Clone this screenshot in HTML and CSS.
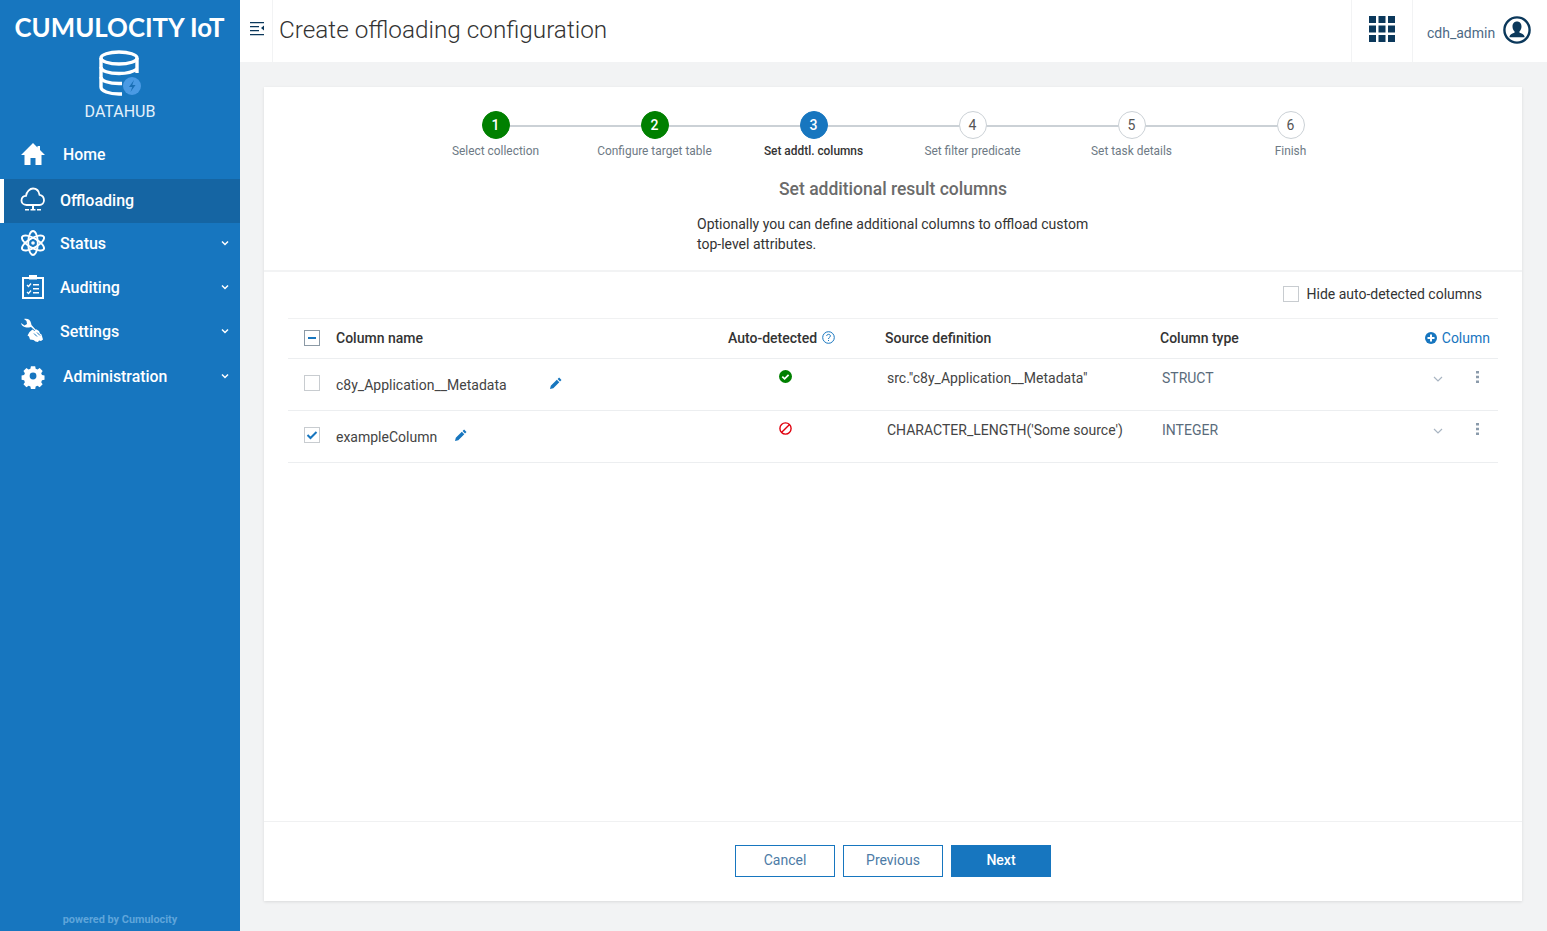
FILE: index.html
```html
<!DOCTYPE html>
<html lang="en">
<head>
    <meta charset="UTF-8">
    <meta name="viewport" content="width=device-width, initial-scale=1.0">
    <title>Create offloading configuration</title>
    <link rel="stylesheet" href="styles.css">
</head>
<body>
    <div class="app">
        <!-- Sidebar -->
        <aside class="sidebar">
            <div class="brand">CUMULOCITY IoT</div>
            <div class="app-logo">
                <svg class="db-icon" width="46" height="48" viewBox="0 0 46 48">
                    <g fill="none" stroke="#fff" stroke-width="3.400">
                        <ellipse cx="21" cy="8" rx="18" ry="6"/>
                        <path d="M3 8v29c0 4 8 7 18 7h3"/>
                        <path d="M39 8v15"/>
                        <path d="M3 17c0 4 8 6.500 18 6.500 8 0 14-1.500 18-4.500"/>
                        <path d="M3 27c0 4 8 6.500 18 6.500h3"/>
                    </g>
                    <circle cx="34" cy="36" r="9" fill="#4a9ae4"/>
                    <path d="M36 30l-5 7h3.200l-1.700 5 5-7h-3.200z" fill="#1a6fb5"/>
                </svg>
                <div class="app-name">DATAHUB</div>
            </div>
            <nav class="nav">
                <a class="nav-item nav-home">
                    <svg class="nav-icon" width="26" height="24" viewBox="0 0 26 24"><path d="M13 1L1 13h3.500v10h6v-7h5v7h6V13H25l-5-5V4h-2.500v1.500z" fill="#fff"/></svg>
                    <span>Home</span>
                </a>
                <a class="nav-item active">
                    <svg class="nav-icon" width="26" height="26" viewBox="0 0 26 26"><path d="M6.500 18C3 18 1.500 15.500 1.500 13.500c0-3 2.300-4.700 4.500-4.700C6.500 4.500 10 1.500 13 1.500c4 0 6 3 6.500 6.300 2.500.5 4.500 2.500 4.500 5.500 0 2.500-2 4.700-4.500 4.700z" fill="none" stroke="#fff" stroke-width="1.800"/><path d="M12 18h2v4h-2zM5 22h4v1.500H5zM10.500 22h5v1.500h-5zM17 22h4v1.500h-4z" fill="#fff"/></svg>
                    <span>Offloading</span>
                </a>
                <a class="nav-item">
                    <svg class="nav-icon" width="26" height="26" viewBox="0 0 26 26"><g fill="none" stroke="#fff" stroke-width="1.900"><ellipse cx="13" cy="13" rx="12" ry="4.800" transform="rotate(90 13 13)"/><ellipse cx="13" cy="13" rx="12.500" ry="4.800" transform="rotate(30 13 13)"/><ellipse cx="13" cy="13" rx="12.500" ry="4.800" transform="rotate(150 13 13)"/></g><circle cx="13" cy="13" r="1.800" fill="#fff"/></svg>
                    <span>Status</span>
                    <svg class="caret" width="8" height="6" viewBox="0 0 8 6"><path d="M1 1.500l3 3 3-3" fill="none" stroke="#fff" stroke-width="1.500"/></svg>
                </a>
                <a class="nav-item">
                    <svg class="nav-icon" width="26" height="26" viewBox="0 0 26 26"><path d="M3 4h20v20H3z" fill="none" stroke="#fff" stroke-width="2"/><path d="M9 1h8v4.500H9z" fill="#fff"/><path d="M7 11l1.500 1.500L11 9.500M7 18l1.500 1.500L11 16.500" fill="none" stroke="#fff" stroke-width="1.300"/><path d="M13 10h6v1.500h-6zM13 14h6v1.500h-6zM13 18h6v1.500h-6z" fill="#fff"/></svg>
                    <span>Auditing</span>
                    <svg class="caret" width="8" height="6" viewBox="0 0 8 6"><path d="M1 1.500l3 3 3-3" fill="none" stroke="#fff" stroke-width="1.500"/></svg>
                </a>
                <a class="nav-item">
                    <svg class="nav-icon" width="26" height="26" viewBox="0 0 26 26"><path d="M1 5l3.500 2.500L7 6 6.500 3 4 1c3.500-.8 6.500.8 7 4l.5 2 4 4.500 2 .5-1.500 1.500L11 9 9 9.500C6 10 2 9 1 5z" fill="#fff"/><path d="M9.500 14l3-2.500 2 1.500 2-1.500 2.500 1.500 1 2.500 1.500 1 1.500 5-2 1.500-2-.5-1 1.500-2.500-.5-2-1.500-3.500-.5-1-3-1.500-1z" fill="#fff"/><path d="M14 15.500l3 3M17 14.500l3 3" stroke="#1776bf" stroke-width="1"/></svg>
                    <span>Settings</span>
                    <svg class="caret" width="8" height="6" viewBox="0 0 8 6"><path d="M1 1.500l3 3 3-3" fill="none" stroke="#fff" stroke-width="1.500"/></svg>
                </a>
                <a class="nav-item nav-home nav-admin">
                    <svg class="nav-icon" width="26" height="26" viewBox="0 0 26 26"><path fill-rule="evenodd" d="M10.500 2h5l.6 3 2.200.9 2.500-1.700 3.500 3.500-1.700 2.500.9 2.200 3 .6v5l-3 .6-.9 2.200 1.700 2.500-3.500 3.500-2.500-1.700-2.200.9-.6 3h-5l-.6-3-2.200-.9-2.500 1.700-3.500-3.500 1.700-2.500-.9-2.200-3-.6v-5l3-.6.900-2.200-1.700-2.500 3.500-3.500 2.500 1.700 2.200-.9zM13 9.500a4 4 0 100 8 4 4 0 000-8z" transform="translate(2 1.500) scale(.85)" fill="#fff"/></svg>
                    <span>Administration</span>
                    <svg class="caret" width="8" height="6" viewBox="0 0 8 6"><path d="M1 1.500l3 3 3-3" fill="none" stroke="#fff" stroke-width="1.500"/></svg>
                </a>
            </nav>
            <div class="powered">powered by Cumulocity</div>
        </aside>

        <div class="main">
            <!-- Header -->
            <header class="topbar">
                <div class="toggle">
                    <svg width="14" height="14" viewBox="0 0 14 14"><path d="M0 0h14v1.300H0zM0 4h9v1.300H0zM0 8h9v1.300H0zM0 12h14v1.300H0z" fill="#0b385b"/><path d="M14 3.500v5L11 6z" fill="#0b385b"/></svg>
                </div>
                <h1 class="page-title">Create offloading configuration</h1>
                <div class="apps">
                    <svg width="26" height="26" viewBox="0 0 26 26" fill="#0b385b"><path d="M0 0h7v7H0zM9.500 0h7v7h-7zM19 0h7v7h-7zM0 9.500h7v7H0zM9.500 9.500h7v7h-7zM19 9.500h7v7h-7zM0 19h7v7H0zM9.500 19h7v7h-7zM19 19h7v7h-7z"/></svg>
                </div>
                <div class="user">
                    <span class="user-name">cdh_admin</span>
                    <svg width="28" height="28" viewBox="0 0 28 28"><circle cx="14" cy="14" r="12.600" fill="none" stroke="#0b385b" stroke-width="2.400"/><path d="M14 5.500c3 0 4.500 2.300 4.500 5 0 2-.8 3.800-2 4.800v1.500c2 .8 4.500 1.500 5 3.500v1H6.500v-1c.5-2 3-2.700 5-3.500v-1.500c-1.200-1-2-2.800-2-4.800 0-2.700 1.500-5 4.500-5z" fill="#0b385b"/></svg>
                </div>
            </header>

            <div class="content">
                <div class="card">
                    <!-- Stepper -->
                    <div class="stepper">
                        <div class="step done"><span class="dot">1</span><span class="step-label">Select collection</span></div>
                        <div class="step done"><span class="dot">2</span><span class="step-label">Configure target table</span></div>
                        <div class="step current"><span class="dot">3</span><span class="step-label">Set addtl. columns</span></div>
                        <div class="step"><span class="dot">4</span><span class="step-label">Set filter predicate</span></div>
                        <div class="step"><span class="dot">5</span><span class="step-label">Set task details</span></div>
                        <div class="step"><span class="dot">6</span><span class="step-label">Finish</span></div>
                    </div>

                    <h2 class="step-title">Set additional result columns</h2>
                    <p class="step-desc">Optionally you can define additional columns to offload custom top-level attributes.</p>

                    <div class="card-body">
                        <div class="filter-row">
                            <span class="check"></span>
                            <span>Hide auto-detected columns</span>
                        </div>

                        <div class="row head">
                            <div class="cell-check"><span class="check mixed"></span></div>
                            <div>Column name</div>
                            <div class="auto-head">Auto-detected
                                <svg width="13" height="13" viewBox="0 0 13 13"><circle cx="6.500" cy="6.500" r="5.800" fill="none" stroke="#1776bf"/><path d="M4.700 5c0-2.200 3.700-2.200 3.700 0 0 1.400-1.900 1.300-1.900 3" fill="none" stroke="#1776bf"/><path d="M6 9h1v1H6z" fill="#1776bf"/></svg>
                            </div>
                            <div>Source definition</div>
                            <div>Column type</div>
                            <div class="add-col">
                                <svg width="12" height="12" viewBox="0 0 12 12"><circle cx="6" cy="6" r="6" fill="#1776bf"/><path d="M5 2.500h2V5h2.500v2H7v2.500H5V7H2.500V5H5z" fill="#fff"/></svg>
                                <span>Column</span>
                            </div>
                        </div>

                        <div class="row item">
                            <div class="cell-check"><span class="check"></span></div>
                            <div class="name-cell name-wide"><span>c8y_Application__Metadata</span>
                                <svg class="pencil" width="12" height="12" viewBox="0 0 12 12"><path d="M0 12l.8-3.300 6-6L9.300 5.200l-6 6zM7.600 2l1.500-1.500 2.400 2.400L10 4.400z" fill="#1776bf"/></svg>
                            </div>
                            <div class="status-cell">
                                <svg width="13" height="13" viewBox="0 0 13 13"><circle cx="6.500" cy="6.500" r="6.500" fill="#008000"/><path d="M3.300 6.700l2.300 2.200 4-4" fill="none" stroke="#fff" stroke-width="1.700"/></svg>
                            </div>
                            <div class="src-cell">src."c8y_Application__Metadata"</div>
                            <div class="type-cell">STRUCT</div>
                            <div class="row-actions">
                                <svg width="10" height="6" viewBox="0 0 10 6"><path d="M1 1l4 4 4-4" fill="none" stroke="#a9b5c2" stroke-width="1.200"/></svg>
                                <svg width="3" height="12" viewBox="0 0 3 12" fill="#8b9bab"><path d="M0 0h3v2.500H0zM0 4.700h3v2.500H0zM0 9.500h3V12H0z"/></svg>
                            </div>
                        </div>

                        <div class="row item">
                            <div class="cell-check"><span class="check checked"><svg width="12" height="10" viewBox="0 0 12 10"><path d="M1.500 5l3 3 6-6" fill="none" stroke="#1776bf" stroke-width="2"/></svg></span></div>
                            <div class="name-cell"><span>exampleColumn</span>
                                <svg class="pencil" width="12" height="12" viewBox="0 0 12 12"><path d="M0 12l.8-3.300 6-6L9.300 5.200l-6 6zM7.600 2l1.500-1.500 2.400 2.400L10 4.400z" fill="#1776bf"/></svg>
                            </div>
                            <div class="status-cell">
                                <svg width="13" height="13" viewBox="0 0 13 13"><circle cx="6.500" cy="6.500" r="5.600" fill="none" stroke="#e0000e" stroke-width="1.400"/><path d="M2.700 10.300l7.600-7.600" stroke="#e0000e" stroke-width="1.400"/></svg>
                            </div>
                            <div class="src-cell">CHARACTER_LENGTH('Some source')</div>
                            <div class="type-cell">INTEGER</div>
                            <div class="row-actions">
                                <svg width="10" height="6" viewBox="0 0 10 6"><path d="M1 1l4 4 4-4" fill="none" stroke="#a9b5c2" stroke-width="1.200"/></svg>
                                <svg width="3" height="12" viewBox="0 0 3 12" fill="#8b9bab"><path d="M0 0h3v2.500H0zM0 4.700h3v2.500H0zM0 9.500h3V12H0z"/></svg>
                            </div>
                        </div>
                    </div>

                    <div class="card-footer">
                        <button class="btn">Cancel</button>
                        <button class="btn">Previous</button>
                        <button class="btn btn-primary">Next</button>
                    </div>
                </div>
            </div>
        </div>
    </div>
</body>
</html>
```

FILE: styles.css
```css
* {
    box-sizing: border-box;
}
body {
    font-family: Roboto, Arial, sans-serif;
    font-size: 14px;
    color: #333;
    background-color: #f2f3f4;
    margin: 0;
    padding: 0;
    overflow: hidden;
}
.app {
    display: flex;
    height: 931px;
}
/* Sidebar */
.sidebar {
    width: 240px;
    flex: none;
    background-color: #1776bf;
    color: #fff;
    display: flex;
    flex-direction: column;
}
.brand {
    font-family: Lato, Arial, sans-serif;
    font-weight: 700;
    font-size: 25.800px;
    line-height: 30px;
    text-align: center;
    padding: 12px 1px 0 0;
    white-space: nowrap;
}
.app-logo {
    display: flex;
    flex-direction: column;
    align-items: center;
    padding-top: 8px;
}
.db-icon {
    display: block;
    margin-left: 1px;
}
.app-name {
    font-size: 16px;
    line-height: 20px;
    margin-top: 4px;
    color: #e3f1fb;
}
.nav {
    margin-top: 10px;
}
.nav-item {
    display: flex;
    align-items: center;
    height: 44px;
    padding: 0 11px 0 20px;
    font-size: 16px;
    font-weight: 500;
}
.nav-icon {
    flex: none;
    margin-right: 14px;
}
.nav-item span {
    flex: 1;
}
.nav-home {
    padding-left: 20px;
    font-size: 15.800px;
}
.nav-home .nav-icon {
    margin-right: 17px;
}
.nav-admin {
    margin-top: 1px;
}
.nav-item.active {
    background-color: #1565a3;
    border-left: 4px solid #fff;
    padding-left: 16px;
    padding-bottom: 2px;
    margin-top: 3px;
}
.nav-item.active + .nav-item {
    margin-top: -2px;
}
.powered {
    margin-top: auto;
    padding-bottom: 5px;
    text-align: center;
    font-size: 10.900px;
    font-weight: 700;
    color: #5fa5da;
}
/* Header */
.main {
    flex: 1;
    display: flex;
    flex-direction: column;
    min-width: 0;
}
.topbar {
    height: 62px;
    flex: none;
    background-color: #fff;
    display: flex;
    align-items: stretch;
}
.toggle {
    width: 33px;
    display: flex;
    align-items: center;
    justify-content: center;
    border-right: 1px solid #f2f3f4;
    padding: 0 0 4px 2px;
}
.page-title {
    flex: 1;
    margin: 0;
    padding-left: 6px;
    font-size: 24.300px;
    font-weight: 300;
    line-height: 60px;
    color: #333;
}
.apps {
    width: 62px;
    display: flex;
    align-items: center;
    justify-content: center;
    border-left: 1px solid #f2f3f4;
    border-right: 1px solid #f2f3f4;
    padding-bottom: 4px;
}
.user {
    width: 134px;
    display: flex;
    align-items: center;
    padding-left: 14px;
    padding-bottom: 3px;
    gap: 8px;
}
.user-name {
    color: #4d6a85;
    padding-top: 7px;
}
/* Card */
.content {
    flex: 1;
    padding: 25px 25px 30px 24px;
    min-height: 0;
}
.card {
    height: 814px;
    background-color: #fff;
    box-shadow: 0 1px 3px rgba(0, 0, 0, 0.1);
    display: flex;
    flex-direction: column;
}
.stepper {
    display: grid;
    grid-template-columns: repeat(6, 159px);
    justify-content: center;
    padding-top: 24px;
}
.step {
    position: relative;
    display: flex;
    flex-direction: column;
    align-items: center;
}
.step::before {
    content: "";
    position: absolute;
    top: 14px;
    left: 50%;
    width: 100%;
    height: 2px;
    background-color: #cbd1d6;
}
.step:last-child::before {
    display: none;
}
.dot {
    position: relative;
    width: 28px;
    height: 28px;
    border-radius: 50%;
    border: 1px solid #cbd1d6;
    background-color: #fff;
    color: #555;
    text-align: center;
    line-height: 26px;
    font-size: 14px;
}
.done .dot {
    background-color: #008000;
    border-color: #008000;
    color: #fff;
    font-weight: 500;
}
.current .dot {
    background-color: #1776bf;
    border-color: #1776bf;
    color: #fff;
    font-weight: 500;
}
.step-label {
    font-size: 11.900px;
    line-height: 14px;
    margin-top: 5px;
    color: #6e7a85;
    white-space: nowrap;
}
.current .step-label {
    color: #333;
    font-weight: 500;
}
.step-title {
    margin: 21px 0 0;
    text-align: center;
    font-size: 17.500px;
    font-weight: 500;
    line-height: 21px;
    color: #6b6b6b;
}
.step-desc {
    width: 410px;
    margin: 14px 0 0 433px;
    line-height: 20px;
    padding-bottom: 16px;
    color: #333;
}
.card-body {
    flex: 1;
    border-top: 2px solid #f2f3f4;
    padding: 0 24px;
}
.filter-row {
    height: 46px;
    display: flex;
    align-items: center;
    justify-content: flex-end;
    gap: 7px;
    padding: 0 16px 2px 0;
    color: #333;
}
.check {
    display: inline-flex;
    align-items: center;
    justify-content: center;
    width: 16px;
    height: 16px;
    border: 1px solid #c8ccd0;
    background-color: #fff;
}
.check.mixed {
    border-color: #8c9aa6;
}
.check.mixed::after {
    content: "";
    width: 8px;
    height: 2px;
    background-color: #1776bf;
}
.row {
    display: grid;
    grid-template-columns: 48px 392px 157px 275px 1fr 72px;
    border-top: 1px solid #f0f1f2;
}
.row.head {
    height: 40px;
    align-items: center;
    font-weight: 500;
    color: #333;
    padding-bottom: 1px;
}
.row.item {
    height: 52px;
    border-top: 1px solid #eceef0;
    color: #444;
}
.row.item:last-child {
    border-bottom: 1px solid #eceef0;
    height: 53px;
}
.cell-check {
    display: flex;
    padding-left: 16px;
}
.item .cell-check {
    padding-top: 16px;
}
.auto-head {
    display: flex;
    align-items: center;
    gap: 5px;
}
.auto-head svg {
    margin-top: -2px;
}
.add-col {
    display: flex;
    align-items: center;
    justify-content: flex-end;
    gap: 5px;
    padding-right: 8px;
    font-weight: 400;
    color: #1776bf;
    margin-left: -40px;
}
.name-cell {
    display: flex;
    align-items: center;
    gap: 18px;
    height: 52px;
    padding-bottom: 1px;
}
.name-wide {
    gap: 43px;
}
.name-cell .pencil {
    margin-top: -4px;
}
.status-cell {
    padding: 11px 0 0 51px;
}
.src-cell {
    padding: 11px 0 0 2px;
    line-height: 16px;
}
.type-cell {
    padding: 11px 0 0 2px;
    line-height: 16px;
    color: #5a6b7b;
}
.row-actions {
    display: flex;
    gap: 33px;
    justify-content: flex-end;
    padding: 12px 19px 0 0;
    align-items: flex-start;
}
.row-actions svg:first-child {
    margin-top: 5px;
}
/* Footer */
.card-footer {
    height: 80px;
    flex: none;
    border-top: 1px solid #f0f1f2;
    display: flex;
    justify-content: center;
    gap: 8px;
    padding-top: 23px;
}
.btn {
    width: 100px;
    height: 32px;
    padding: 0 0 2px;
    font-family: Roboto, Arial, sans-serif;
    font-size: 14px;
    color: #4d7ba6;
    background-color: #fff;
    border: 1px solid #1776bf;
    cursor: pointer;
}
.btn-primary {
    background-color: #1776bf;
    color: #fff;
    font-weight: 500;
}
```
